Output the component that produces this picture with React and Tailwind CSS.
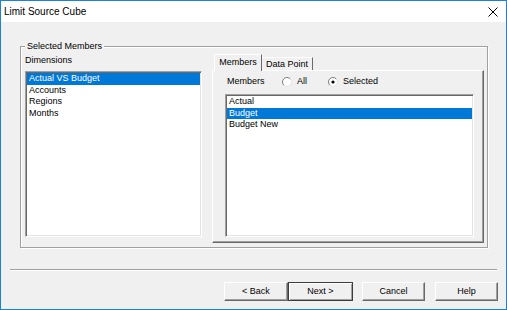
import React from 'react';

const FONT = { fontFamily: '"Liberation Sans", Arial, sans-serif' };

const DIMENSIONS = ['Actual VS Budget', 'Accounts', 'Regions', 'Months'];
const MEMBERS = ['Actual', 'Budget', 'Budget New'];

function ListBox({ items, selected, className }) {
  return (
    <div
      className={`bg-white border border-t-[#a0a0a0] border-l-[#a0a0a0] border-r-white border-b-white shadow-[inset_1px_1px_0_#696969,inset_-1px_-1px_0_#e3e3e3] pt-[1px] pl-[1px] pr-[1px] ${className}`}
    >
      {items.map((item) => (
        <div
          key={item}
          className={`h-[11.5px] leading-[11.5px] pl-[2px] whitespace-nowrap ${
            item === selected ? 'bg-[#0078d7] text-white' : 'text-black'
          }`}
        >
          {item}
        </div>
      ))}
    </div>
  );
}

function Radio({ checked, label, className }) {
  return (
    <div className={`flex items-center ${className}`}>
      <svg width="10" height="10" viewBox="0 0 10 10" className="shrink-0">
        <circle cx="5" cy="5" r="4.5" fill="#fff" stroke="#e3e3e3" />
        <path d="M1.8 8.2 A4.5 4.5 0 0 1 8.2 1.8" fill="none" stroke="#808080" />
        {checked && <circle cx="5" cy="5" r="1.6" fill="#000" />}
      </svg>
      <span className="ml-[5px]">{label}</span>
    </div>
  );
}

function Button({ children, primary, className }) {
  return (
    <button
      className={`h-[19px] flex items-center justify-center bg-[#f0f0f0] text-black ${
        primary
          ? 'border border-[#3c3c3c] shadow-[inset_1px_1px_0_#fff,inset_-1px_-1px_0_#a0a0a0]'
          : 'border border-t-white border-l-white border-r-[#696969] border-b-[#696969] shadow-[inset_-1px_-1px_0_#a0a0a0]'
      } ${className}`}
    >
      {children}
    </button>
  );
}

export default function App() {
  return (
    <div
      className="w-[507px] h-[310px] border border-[#1883d7] flex flex-col bg-[#f0f0f0] text-[9px] text-black overflow-hidden"
      style={FONT}
    >
      {/* title bar */}
      <div className="h-[21px] shrink-0 bg-white flex items-center justify-between pl-[3px] pr-[8px]">
        <span className="text-[10px]">Limit Source Cube</span>
        <svg width="10" height="10" viewBox="0 0 10 10">
          <path d="M0.5 0.5 L9.5 9.5 M9.5 0.5 L0.5 9.5" stroke="#000" strokeWidth="1" />
        </svg>
      </div>

      <fieldset className="ml-[19px] mt-[18px] w-[468px] border border-[#a0a0a0] shadow-[inset_1px_1px_0_#fff,1px_1px_0_#fff] pl-[4px] pb-[4px]">
        <legend className="leading-[13px] px-[2px] bg-[#f0f0f0]">Selected Members</legend>
        <div className="flex">
          <div className="flex flex-col">
            <div className="mt-[1px] leading-[13px]">Dimensions</div>
            <ListBox
              items={DIMENSIONS}
              selected="Actual VS Budget"
              className="mt-[4px] w-[177px] h-[166px]"
            />
          </div>

          <div className="ml-[10px] flex flex-col">
            <div className="h-[17px] flex items-end pl-[2px]">
              <div className="relative z-10 -mb-[1px] h-[17px] w-[48px] bg-[#f0f0f0] border-l border-t border-r border-l-white border-t-white border-r-[#696969] flex justify-center pt-[1px] leading-[13px]">
                Members
              </div>
              <div className="h-[13px] w-[51px] border-t border-r border-t-white border-r-[#696969] flex justify-center leading-[13px]">
                Data Point
              </div>
            </div>
            <div className="w-[272px] h-[173px] border border-t-white border-l-white border-r-[#696969] border-b-[#696969] shadow-[inset_-1px_-1px_0_#a0a0a0] pl-[12px] pt-[4px]">
              <div className="flex items-center leading-[13px]">
                <span className="w-[57px] pl-[2px]">Members</span>
                <Radio label="All" className="w-[46px]" />
                <Radio label="Selected" checked />
              </div>
              <ListBox
                items={MEMBERS}
                selected="Budget"
                className="mt-[6px] w-[249px] h-[143px]"
              />
            </div>
          </div>
        </div>
      </fieldset>

      <div className="mx-[9px] mt-[21px] border-t border-b border-t-[#a0a0a0] border-b-white" />

      <div className="flex mt-[11px] pl-[223px]">
        <Button className="w-[64px]">&lt; Back</Button>
        <Button primary className="w-[65px]">Next &gt;</Button>
        <Button className="ml-[9px] w-[63px]">Cancel</Button>
        <Button className="ml-[10px] w-[63px]">Help</Button>
      </div>
    </div>
  );
}
